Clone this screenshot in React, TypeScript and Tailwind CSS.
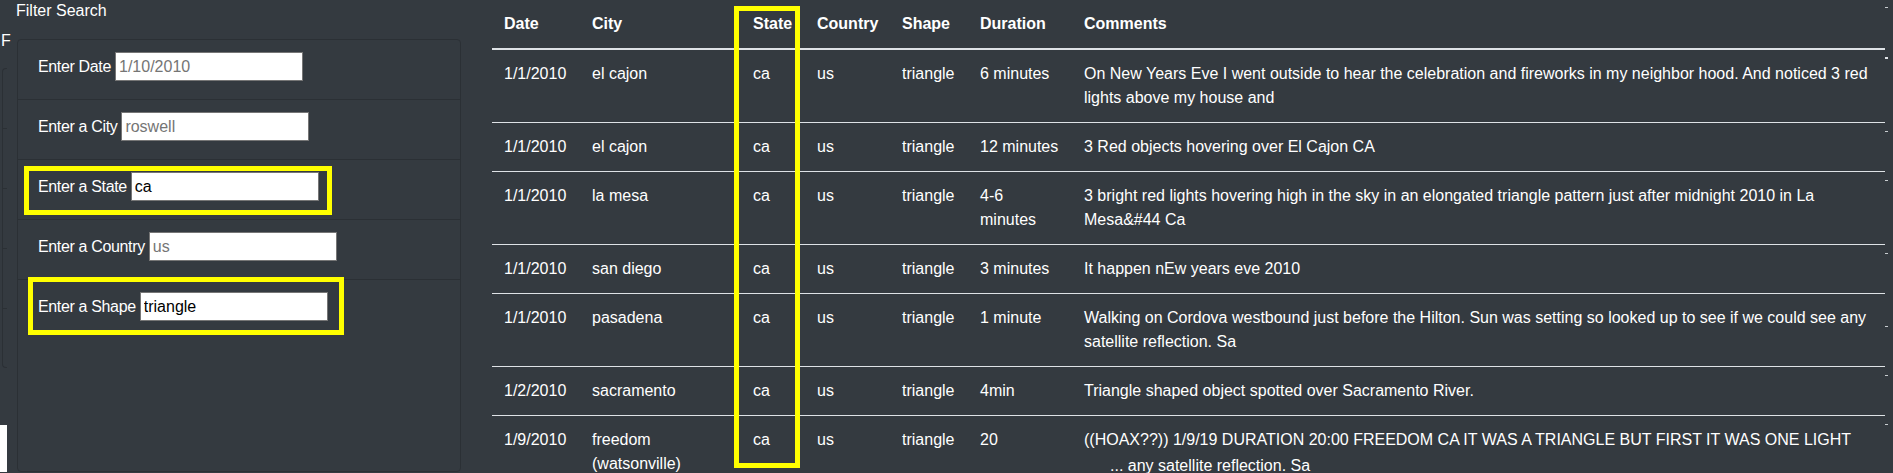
import React from "react";

type Row = {
  date: string;
  city: string[];
  duration: string[];
  comment: string[];
  ghost?: string;
};

const rows: Row[] = [
  {
    date: "1/1/2010",
    city: ["el cajon"],
    duration: ["6 minutes"],
    comment: [
      "On New Years Eve I went outside to hear the celebration and fireworks in my neighbor hood. And noticed 3 red",
      "lights above my house and",
    ],
  },
  {
    date: "1/1/2010",
    city: ["el cajon"],
    duration: ["12 minutes"],
    comment: ["3 Red objects hovering over El Cajon CA"],
  },
  {
    date: "1/1/2010",
    city: ["la mesa"],
    duration: ["4-6", "minutes"],
    comment: [
      "3 bright red lights hovering high in the sky in an elongated triangle pattern just after midnight 2010 in La",
      "Mesa&#44 Ca",
    ],
  },
  {
    date: "1/1/2010",
    city: ["san diego"],
    duration: ["3 minutes"],
    comment: ["It happen nEw years eve 2010"],
  },
  {
    date: "1/1/2010",
    city: ["pasadena"],
    duration: ["1 minute"],
    comment: [
      "Walking on Cordova westbound just before the Hilton. Sun was setting so looked up to see if we could see any",
      "satellite reflection. Sa",
    ],
  },
  {
    date: "1/2/2010",
    city: ["sacramento"],
    duration: ["4min"],
    comment: ["Triangle shaped object spotted over Sacramento River."],
  },
  {
    date: "1/9/2010",
    city: ["freedom", "(watsonville)"],
    duration: ["20"],
    comment: [
      "((HOAX??)) 1/9/19 DURATION 20:00 FREEDOM CA IT WAS A TRIANGLE BUT FIRST IT WAS ONE LIGHT",
    ],
    ghost: "any satellite reflection. Sa",
  },
];

const filters = [
  { label: "Enter Date", placeholder: "1/10/2010", value: "" },
  { label: "Enter a City", placeholder: "roswell", value: "" },
  { label: "Enter a State", placeholder: "", value: "ca" },
  { label: "Enter a Country", placeholder: "us", value: "" },
  { label: "Enter a Shape", placeholder: "", value: "triangle" },
];

const Lines = ({ lines }: { lines: string[] }) => (
  <>
    {lines.map((l, i) => (
      <div key={i} className="whitespace-nowrap">
        {l}
      </div>
    ))}
  </>
);

const App = () => {
  return (
    <div className="h-[473px] w-full overflow-hidden bg-[#343a40] text-white font-['Liberation_Sans',Arial,sans-serif] text-[16px] flex">
      {/* filter panel */}
      <div className="w-[492px] shrink-0">
        <div className="pl-[16px] pt-[1px] leading-5">Filter Search</div>
        <div className="flex">
          <div className="w-[17px] shrink-0">
            <div className="pl-[1px] mt-[8px] leading-6">F</div>
            <div className="mt-[15px] ml-[2px] w-[5px] rounded-l border-l border-y border-[#2b3035]">
              <div className="h-[60px] border-b border-[#2b3035]" />
              <div className="h-[60px] border-b border-[#2b3035]" />
              <div className="h-[60px] border-b border-[#2b3035]" />
              <div className="h-[60px] border-b border-[#2b3035]" />
              <div className="h-[58px]" />
            </div>
            <div className="mt-[57px] w-[7px] h-[47px] bg-white" />
          </div>
          <div className="w-[444px] mt-[18px] rounded border border-[#2b3035]">
            {filters.map((f, i) => (
              <div
                key={f.label}
                className={
                  i === 0
                    ? "relative h-[59px] pl-5 pt-3"
                    : "relative h-[60px] pl-5 pt-3 border-t border-[#2b3035]"
                }
              >
                <div className="flex items-center h-[29px] gap-[4px]">
                  <span className="whitespace-nowrap leading-6 tracking-[-0.35px]">{f.label}</span>
                  <input
                    className="w-[188px] h-[29px] bg-white border border-[#767676] pl-[3px] text-black placeholder:text-[#757575] outline-none"
                    placeholder={f.placeholder}
                    defaultValue={f.value}
                    type="text"
                  />
                </div>
                {i === 2 && (
                  <div className="absolute left-[6px] top-[6px] w-[308px] h-[49px] border-[5px] border-[#ffff00]" />
                )}
                {i === 4 && (
                  <div className="absolute left-[10px] -top-[3px] w-[316px] h-[58px] border-[5px] border-[#ffff00]" />
                )}
              </div>
            ))}
          </div>
        </div>
      </div>

      {/* results table */}
      <div className="relative w-[1393px] shrink-0">
        <table className="w-[1393px] table-fixed border-collapse text-left">
          <colgroup>
            <col className="w-[88px]" />
            <col className="w-[161px]" />
            <col className="w-[64px]" />
            <col className="w-[85px]" />
            <col className="w-[78px]" />
            <col className="w-[104px]" />
            <col className="w-[813px]" />
          </colgroup>
          <thead>
            <tr className="border-b-2 border-[#dee2e6]">
              {["Date", "City", "State", "Country", "Shape", "Duration", "Comments"].map((h) => (
                <th key={h} className="p-3 leading-6 font-bold align-top">
                  {h}
                </th>
              ))}
            </tr>
          </thead>
          <tbody>
            {rows.map((r, i) => (
              <tr key={i} className={i === 0 ? "" : "border-t border-[#dee2e6]"}>
                <td className="p-3 leading-6 align-top">{r.date}</td>
                <td className="p-3 leading-6 align-top">
                  <Lines lines={r.city} />
                </td>
                <td className="p-3 leading-6 align-top">ca</td>
                <td className="p-3 leading-6 align-top">us</td>
                <td className="p-3 leading-6 align-top">triangle</td>
                <td className="p-3 leading-6 align-top">
                  <Lines lines={r.duration} />
                </td>
                <td className="p-3 leading-6 align-top">
                  <Lines lines={r.comment} />
                  {r.ghost && (
                    <div className="whitespace-nowrap pl-[26px] mt-[2px]">... {r.ghost}</div>
                  )}
                </td>
              </tr>
            ))}
          </tbody>
        </table>
        {/* highlight over State column */}
        <div className="absolute left-[242px] top-[6px] w-[66px] h-[462px] border-[5px] border-[#ffff00]" />
      </div>

      {/* stray marks at the right edge */}
      <div className="w-[4px] shrink-0 flex flex-col">
        <div className="mt-[7px] w-[3px] h-px bg-[#c8ccd0]" />
        <div className="mt-[49px] w-[3px] h-[2px] bg-[#dee2e6]" />
        <div className="mt-[72px] w-[3px] h-px bg-[#c8ccd0]" />
        <div className="mt-[48px] w-[3px] h-px bg-[#c8ccd0]" />
        <div className="mt-[72px] w-[3px] h-px bg-[#c8ccd0]" />
        <div className="mt-[72px] w-[3px] h-px bg-[#c8ccd0]" />
        <div className="mt-[48px] w-[3px] h-px bg-[#c8ccd0]" />
        <div className="mt-[48px] w-[3px] h-px bg-[#c8ccd0]" />
      </div>
    </div>
  );
};

export default App;
